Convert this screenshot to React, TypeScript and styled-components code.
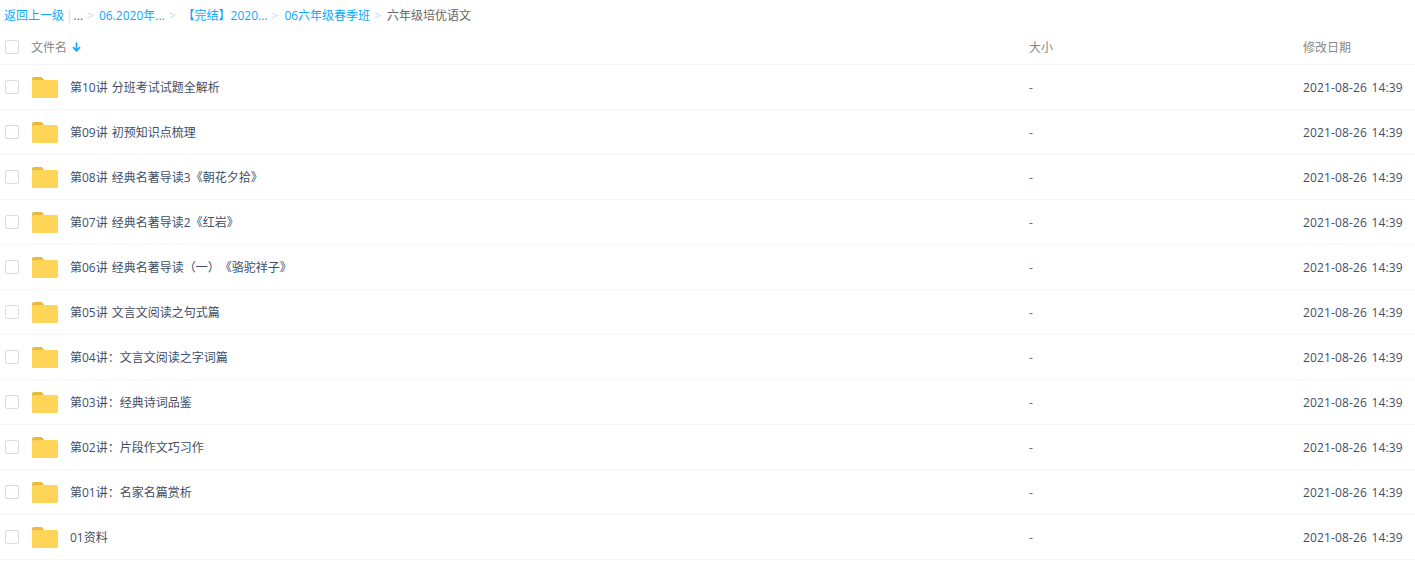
import React from 'react';
import styled, { createGlobalStyle } from 'styled-components';

const files = [
  '第10讲 分班考试试题全解析',
  '第09讲 初预知识点梳理',
  '第08讲 经典名著导读3《朝花夕拾》',
  '第07讲 经典名著导读2《红岩》',
  '第06讲 经典名著导读（一）《骆驼祥子》',
  '第05讲 文言文阅读之句式篇',
  '第04讲：文言文阅读之字词篇',
  '第03讲：经典诗词品鉴',
  '第02讲：片段作文巧习作',
  '第01讲：名家名篇赏析',
  '01资料',
];

const Global = createGlobalStyle`
  html, body {
    margin: 0;
    background: #fff;
    font-family: "Open Sans", "Noto Sans CJK SC", sans-serif;
    font-size: 12px;
    color: #424e67;
    text-spacing-trim: space-all;
    word-spacing: 1px;
  }
`;

const Page = styled.div`
  width: 1415px;
  height: 567px;
  overflow: hidden;
`;

const Crumbs = styled.div`
  height: 30px;
  padding-left: 4px;
  display: flex;
  align-items: center;
  white-space: nowrap;
  color: #666;
`;

const CrumbLink = styled.a`
  color: #09aaff;
`;

const Sep = styled.span<{ $after?: number }>`
  color: #c5d8f3;
  margin: 0 ${(p) => p.$after ?? 5}px 0 4px;
`;

const Bar = styled.span`
  color: #c5d8f3;
  margin: 0 1px 0 2px;
`;

const Row = styled.div<{ $head?: boolean }>`
  display: grid;
  grid-template-columns: 1029px 274px 1fr;
  height: ${(p) => (p.$head ? 34 : 44)}px;
  align-items: center;
  border-bottom: 1px solid #f5f6f9;
  color: ${(p) => (p.$head ? '#888' : '#424e67')};
`;

const NameCell = styled.div`
  display: flex;
  align-items: center;
  padding-left: 5px;
`;

const Check = styled.span`
  width: 12px;
  height: 12px;
  border: 1px solid #d7dce5;
  border-radius: 2px;
  flex: none;
`;

const FolderWrap = styled.span`
  display: flex;
  padding-top: 1px;
  margin-left: 13px;
  margin-right: 12px;
`;

const HeadLabel = styled.span`
  margin-left: 12px;
`;

const Arrow = styled.svg`
  margin-left: 5px;
`;

const Size = styled.span`
  color: #666;
`;

const Date = styled.span`
  letter-spacing: 0.15px;
`;

const Folder = () => (
  <svg width="26" height="21" viewBox="0 0 26 21">
    <path d="M0 2a2 2 0 0 1 2-2h7a2 2 0 0 1 1.6.8L12 3v2H0z" fill="#e9b93f" />
    <rect y="3" width="26" height="18" rx="1.5" fill="#ffd558" />
  </svg>
);

export default function App() {
  return (
    <Page>
      <Global />
      <Crumbs>
        <CrumbLink>返回上一级</CrumbLink>
        <Bar>|</Bar>
        <span>...</span>
        <Sep>&gt;</Sep>
        <CrumbLink>06.2020年...</CrumbLink>
        <Sep $after={7}>&gt;</Sep>
        <CrumbLink>【完结】2020...</CrumbLink>
        <Sep $after={6}>&gt;</Sep>
        <CrumbLink>06六年级春季班</CrumbLink>
        <Sep $after={6}>&gt;</Sep>
        <span>六年级培优语文</span>
      </Crumbs>
      <Row $head>
        <NameCell>
          <Check />
          <HeadLabel>文件名</HeadLabel>
          <Arrow width="9" height="10" viewBox="0 0 9 10">
            <path d="M4.5 0.5v8M1 5.2l3.5 3.6L8 5.2" fill="none" stroke="#09aaff" strokeWidth="1.7" />
          </Arrow>
        </NameCell>
        <span>大小</span>
        <span>修改日期</span>
      </Row>
      {files.map((name) => (
        <Row key={name}>
          <NameCell>
            <Check />
            <FolderWrap>
              <Folder />
            </FolderWrap>
            <span>{name}</span>
          </NameCell>
          <Size>-</Size>
          <Date>2021-08-26 14:39</Date>
        </Row>
      ))}
    </Page>
  );
}
